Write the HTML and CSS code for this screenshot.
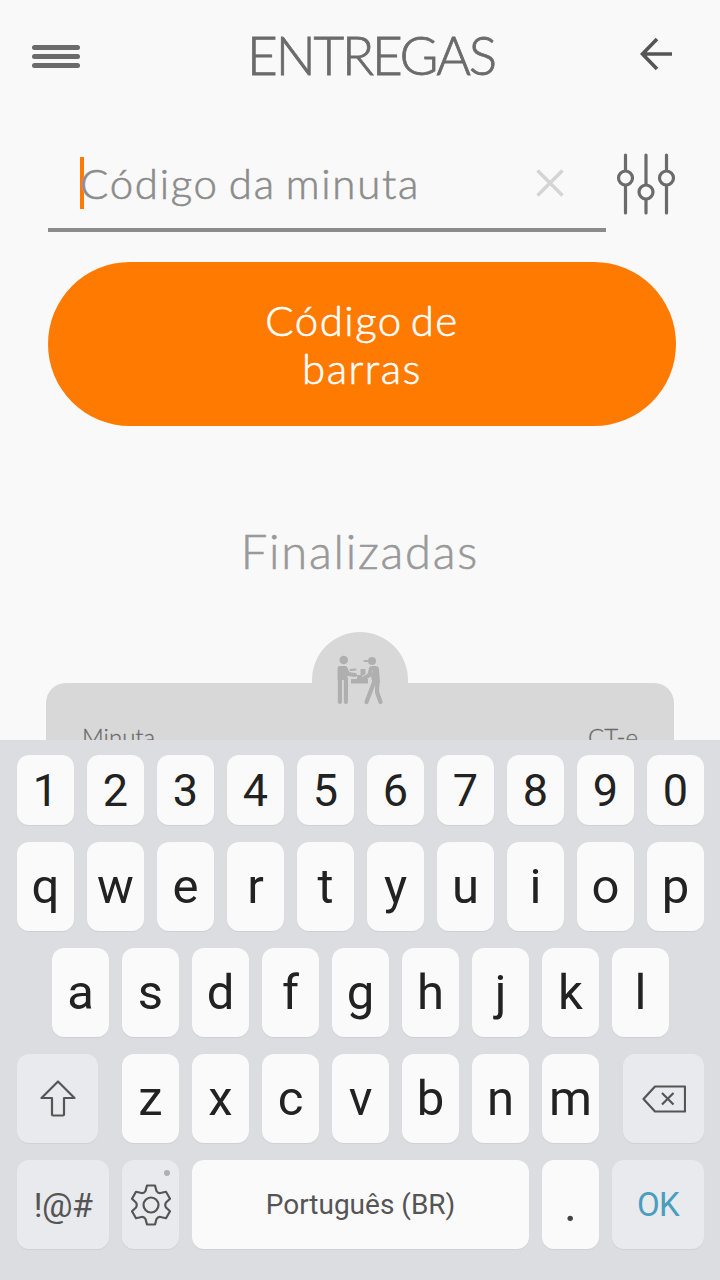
FILE: index.html
```html
<!DOCTYPE html>
<html lang="pt-BR">
<head>
  <meta charset="UTF-8">
  <title>Entregas</title>
  <link rel="stylesheet" href="styles.css">
</head>
<body>
  <div class="app">
    <header class="header">
      <button class="menu" aria-label="Menu"><i></i><i></i><i></i></button>
      <h1>ENTREGAS</h1>
      <button class="back" aria-label="Voltar">
        <svg width="32" height="34" viewBox="0 0 32 34"><path d="M32 17H3M17 2L2.500 17L17 32" /></svg>
      </button>
    </header>

    <div class="search">
      <div class="field">
        <span class="caret"></span>
        <span class="placeholder">Código da minuta</span>
        <svg class="clear" width="28" height="28" viewBox="0 0 28 28"><path d="M1.500 1.500L26.500 26.500M26.500 1.500L1.500 26.500" /></svg>
      </div>
      <svg class="filter" width="60" height="62" viewBox="0 0 60 62">
        <path d="M9.500 2V17M9.500 33V60M30 2V31M30 47V60M50.500 2V17M50.500 33V60" />
        <circle cx="9.500" cy="25" r="7" />
        <circle cx="30" cy="39" r="7" />
        <circle cx="50.500" cy="25" r="7" />
      </svg>
    </div>

    <button class="scan">Código de<br>barras</button>

    <h2>Finalizadas</h2>

    <div class="card">
      <div class="badge">
        <svg width="46" height="50" viewBox="0 0 46 50">
          <!-- customer -->
          <circle cx="6.700" cy="5" r="4.300" />
          <path d="M0.700 13Q0.700 11 2.700 11H8Q10 11 10.500 13V25H0.700Z" />
          <path class="line" d="M2.900 14V47M8.900 24V47M8.500 14L11 19L18 20" />
          <path class="thin" d="M13.500 15L18.500 14.500" />
          <!-- box -->
          <path d="M14 24H20V20H23.500V14H28.500V19L25 21V24H31V28.500H14Z" />
          <!-- courier -->
          <circle cx="35" cy="6" r="4" />
          <path class="thin" d="M27.500 6H34" />
          <path d="M34.500 11H38.500Q41.500 11 42 14L43 28L35.500 28L34 21L36 16Z" />
          <path class="line" d="M34 13.500L32.500 20L26.500 23.500M37.500 26L29.500 47M40.500 26L40 37L43.500 47" />
        </svg>
      </div>
      <span>Minuta</span>
      <span>CT-e</span>
    </div>
  </div>

  <div class="keyboard">
    <div class="row numbers">
      <b>1</b><b>2</b><b>3</b><b>4</b><b>5</b><b>6</b><b>7</b><b>8</b><b>9</b><b>0</b>
    </div>
    <div class="row">
      <b>q</b><b>w</b><b>e</b><b>r</b><b>t</b><b>y</b><b>u</b><b>i</b><b>o</b><b>p</b>
    </div>
    <div class="row">
      <b>a</b><b>s</b><b>d</b><b>f</b><b>g</b><b>h</b><b>j</b><b>k</b><b>l</b>
    </div>
    <div class="row spread">
      <b class="fn shift">
        <svg width="36" height="37" viewBox="0 0 36 37"><path d="M18 1.500L1.500 18H12V34.500Q12 35.500 13 35.500H23Q24 35.500 24 34.500V18H34.500Z" /></svg>
      </b>
      <div class="row">
        <b>z</b><b>x</b><b>c</b><b>v</b><b>b</b><b>n</b><b>m</b>
      </div>
      <b class="fn shift">
        <svg width="44" height="28" viewBox="0 0 44 28"><path d="M13 1.500H43V26.500H13L1.500 14ZM20 8L31.500 19.500M31.500 8L20 19.500" /></svg>
      </b>
    </div>
    <div class="row">
      <b class="fn wide symbols">!@#</b>
      <b class="fn settings">
        <svg width="40" height="42" viewBox="-20 -21 40 42">
          <path d="M-4 -19.500H4L5.500 -14Q7 -11.500 9.500 -12L15 -13.200L19 -6.300L15 -2.500Q13.500 0 15 2.500L19 6.300L15 13.200L9.500 12Q7 11.500 5.500 14L4 19.500H-4L-5.500 14Q-7 11.500 -9.500 12L-15 13.200L-19 6.300L-15 2.500Q-13.500 0 -15 -2.500L-19 -6.300L-15 -13.200L-9.500 -12Q-7 -11.500 -5.500 -14Z" />
          <circle r="7.500" />
        </svg>
      </b>
      <b class="space">Português (BR)</b>
      <b class="period">.</b>
      <b class="fn wide ok">OK</b>
    </div>
  </div>
</body>
</html>
```
FILE: styles.css
```css
:root {
  --orange: #ff7a00;
  --bg: #f9f9f9;
  --gray: #6b6b6b;
  --card: #d8d8d8;
}

* {
  box-sizing: border-box;
}

body {
  margin: 0;
  width: 720px;
  height: 1280px;
  overflow: hidden;
  background: var(--bg);
  font-family: Lato, sans-serif;
  font-weight: 300;
}

button {
  border: none;
  padding: 0;
  background: none;
  font: inherit;
}

svg {
  display: block;
  fill: none;
  stroke: var(--gray);
}

.app {
  height: 740px;
  overflow: hidden;
}

/* header */
.header {
  display: flex;
  justify-content: space-between;
  align-items: center;
  height: 112px;
  padding: 0 48px 0 32px;
}

.menu {
  display: flex;
  flex-direction: column;
  gap: 4px;
  width: 48px;
}

.menu i {
  height: 5px;
  border-radius: 2.5px;
  background: var(--gray);
}

h1 {
  margin: -3px 0 0 22px;
  font-size: 53px;
  font-weight: 300;
  color: var(--gray);
  letter-spacing: -2.2px;
  -webkit-text-stroke: 0.8px var(--gray);
}

.back svg {
  margin-top: -4px;
  stroke: #555;
  stroke-width: 3.6;
}

/* search */
.search {
  display: flex;
  justify-content: space-between;
  height: 120px;
  padding: 0 44px 0 48px;
}

.field {
  display: flex;
  align-items: center;
  width: 558px;
  padding: 26px 42px 0 32px;
  height: 120px;
  border-bottom: 4px solid #8c8c8c;
}

.caret {
  width: 4px;
  height: 52px;
  margin-right: -4px;
  background: var(--orange);
}

.placeholder {
  flex: 1;
  font-size: 42px;
  color: #8c8c8c;
  letter-spacing: 1.7px;
  word-spacing: -3px;
  -webkit-text-stroke: 0.6px #8c8c8c;
}

.clear {
  stroke: #d4d4d4;
  stroke-width: 3.4;
}

.filter {
  margin-top: 41px;
  stroke-width: 3.2;
  stroke-linecap: round;
}

.scan {
  display: block;
  width: 628px;
  height: 164px;
  margin: 30px 0 0 48px;
  border-radius: 82px;
  background: var(--orange);
  color: #fff;
  font-size: 42px;
  line-height: 48px;
  letter-spacing: 1.5px;
  word-spacing: -5px;
  -webkit-text-stroke: 0.6px #fff;
}

h2 {
  margin: 95px 0 0;
  text-align: center;
  font-size: 47px;
  line-height: 60px;
  font-weight: 300;
  color: #999;
  letter-spacing: 1.8px;
  -webkit-text-stroke: 0.6px #999;
}

/* delivery card */
.card {
  position: relative;
  display: flex;
  justify-content: space-between;
  width: 628px;
  height: 160px;
  margin: 102px 0 0 46px;
  padding: 39px 36px;
  border-radius: 20px;
  background: var(--card);
  color: var(--gray);
  font-size: 24px;
  -webkit-text-stroke: 0.3px var(--gray);
}

.badge {
  position: absolute;
  top: -51px;
  left: 266px;
  width: 96px;
  height: 96px;
  padding: 23px 0 0 25px;
  border-radius: 50%;
  background: var(--card);
}

.badge svg {
  fill: #afafaf;
  stroke: none;
}

.badge .line,
.badge .thin {
  fill: none;
  stroke: #afafaf;
  stroke-width: 4.2;
  stroke-linecap: round;
  stroke-linejoin: round;
}

.badge .thin {
  stroke-width: 2;
}

/* keyboard */
.keyboard {
  display: flex;
  flex-direction: column;
  gap: 17px;
  height: 540px;
  padding: 15px 16px 0 17px;
  background: #dcdde1;
  font-family: Roboto, sans-serif;
}

.row {
  display: flex;
  justify-content: center;
  gap: 13px;
}

.spread {
  justify-content: space-between;
}

.row b {
  display: flex;
  justify-content: center;
  align-items: center;
  width: 57px;
  height: 89px;
  border-radius: 12px;
  background: #fafafa;
  box-shadow: 0 1px 1px #cfd0d4;
  color: #222;
  font-size: 49px;
  font-weight: 400;
}

.numbers b {
  height: 70px;
  font-size: 45px;
}

.row .fn {
  background: #e9eaed;
  color: #555;
}

.fn svg {
  stroke: #555;
  stroke-width: 2.2;
  stroke-linejoin: round;
}

.row .shift {
  width: 81px;
}

.row .wide {
  width: 92px;
}

.row .symbols {
  font-size: 34px;
  letter-spacing: -0.5px;
}

.row .settings {
  position: relative;
}

/* long-press hint dot */
.settings::after {
  content: "";
  position: absolute;
  top: 10px;
  right: 9px;
  width: 6px;
  height: 6px;
  border-radius: 50%;
  background: #b0b0b2;
}

.row .space {
  width: 337px;
  color: #555;
  font-size: 28px;
}

.row .period {
  color: #444;
}

.row .ok {
  color: #4a9dbd;
  font-size: 33px;
  letter-spacing: -0.8px;
}
```
